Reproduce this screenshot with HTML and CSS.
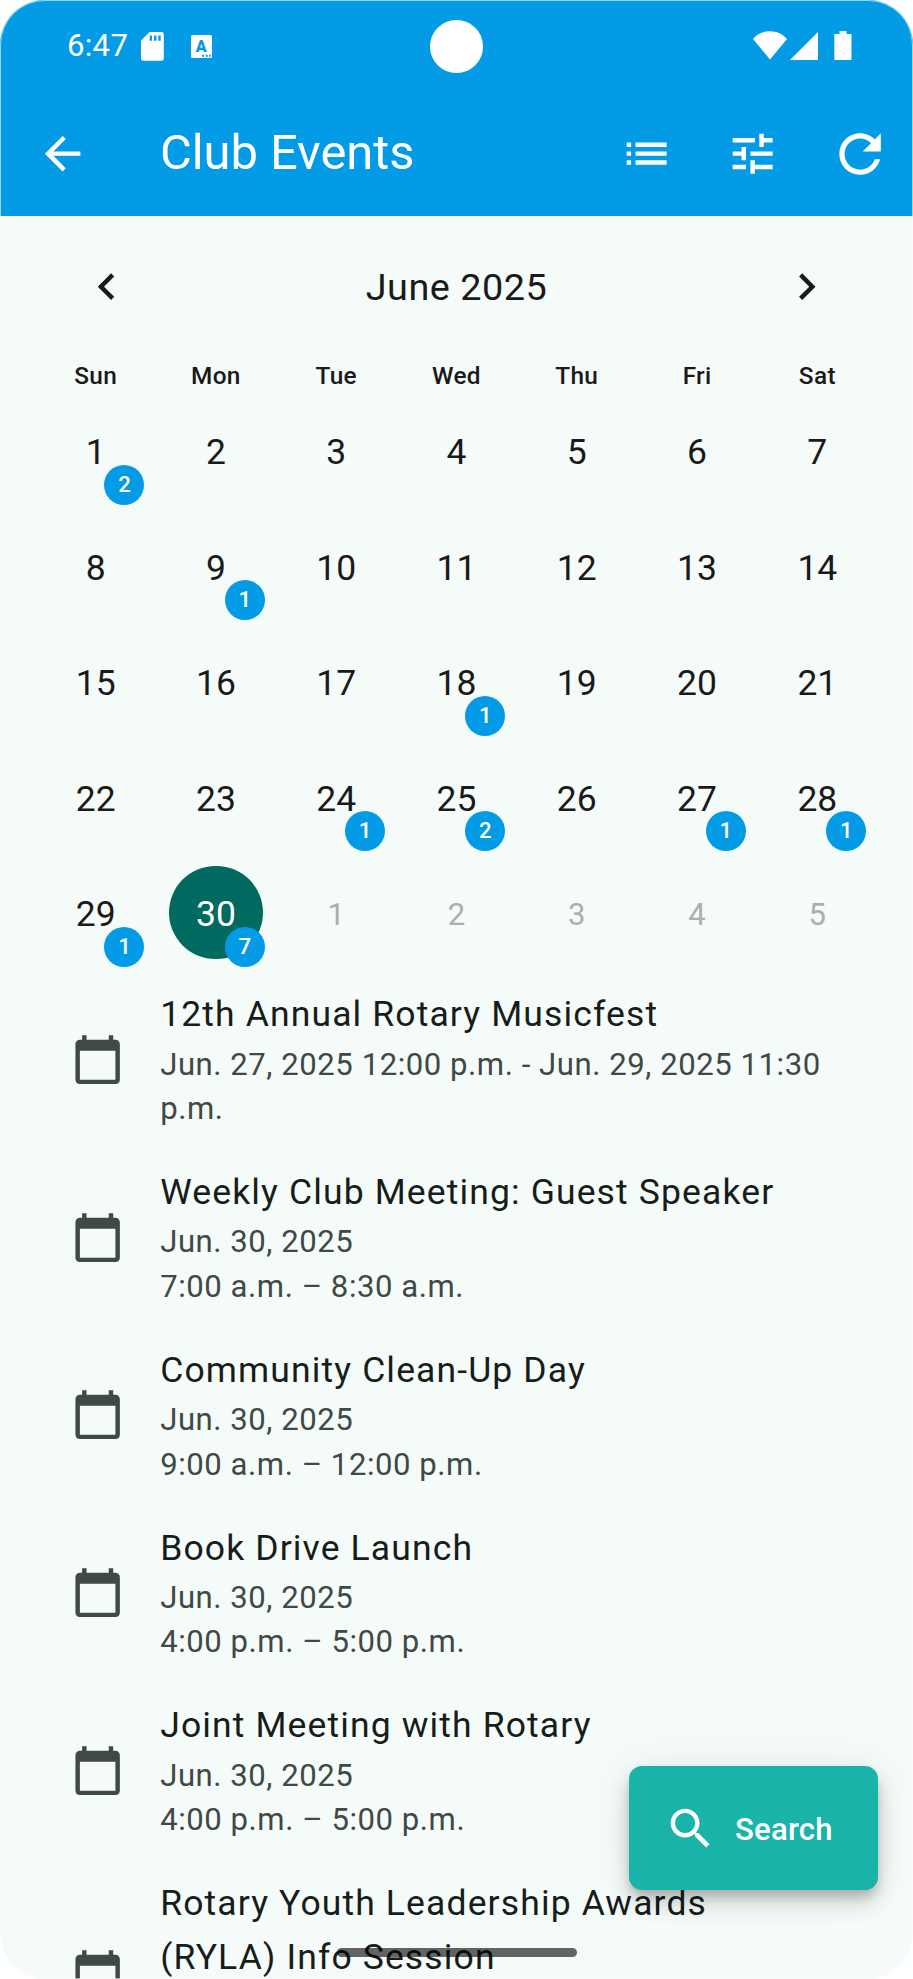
FILE: index.html
```html
<!DOCTYPE html>
<html lang="en">
<head>
    <meta charset="UTF-8">
    <meta name="viewport" content="width=device-width, initial-scale=1.0">
    <title>Club Events</title>
    <link rel="stylesheet" href="styles.css">
</head>
<body>
    <div class="phone">
        <header class="header">
            <div class="status-bar">
                <span class="clock">6:47</span>
                <svg class="sd-icon" viewBox="0 0 23 29"><path fill-rule="evenodd" d="M8.5 0H20.5a2.3 2.3 0 0 1 2.3 2.3V26.5a2.3 2.3 0 0 1-2.3 2.3H2.3A2.3 2.3 0 0 1 0 26.500V8.500zM8.700 3.500v5.300h2.300V3.500zM13 3.500v5.300h2.400V3.500zM17.300 3.500v5.300h2.400V3.500z"/></svg>
                <svg class="lang-icon" viewBox="0 0 21 23">
                    <rect width="21" height="23" rx="1.600"/>
                    <text class="lang-letter" x="10.200" y="16.800" text-anchor="middle">A</text>
                    <path class="lang-dots" d="M11 19.700h2v2h-2zM14.700 19.700h2v2h-2zM18 19.700h1.600v2H18z"/>
                </svg>
                <svg class="wifi-icon" viewBox="0 0 34 29"><path d="M17 28.500 0 8C4.500 3 10.500.3 17 .3S29.500 3 34 8z"/></svg>
                <svg class="signal-icon" viewBox="0 0 28 28"><path d="M28 0v28H0z"/></svg>
                <svg class="battery-icon" viewBox="0 0 18 29"><path d="M5.500 0h7v3H16.500a1 1 0 0 1 1 1V28a1 1 0 0 1-1 1H1.300a1 1 0 0 1-1-1V4a1 1 0 0 1 1-1H5.500z"/></svg>
            </div>
            <div class="toolbar">
                <a class="back" href="#" aria-label="Back">
                    <svg class="icon" viewBox="0 0 24 24"><path d="M20 11H7.830l5.590-5.590L12 4l-8 8 8 8 1.410-1.410L7.830 13H20z"/></svg>
                </a>
                <h1 class="title">Club Events</h1>
                <button class="tool" aria-label="List">
                    <svg class="icon" viewBox="0 0 24 24"><path d="M3 13h2v-2H3zM3 17h2v-2H3zM3 9h2V7H3zM7 13h14v-2H7zM7 17h14v-2H7zM7 7v2h14V7z"/></svg>
                </button>
                <button class="tool" aria-label="Filters">
                    <svg class="icon" viewBox="0 0 24 24"><path d="M3 17v2h6v-2zM3 5v2h10V5zM13 21v-2h8v-2h-8v-2h-2v6zM7 9v2H3v2h4v2h2V9zM21 13v-2H11v2zM15 9h2V7h4V5h-4V3h-2z"/></svg>
                </button>
                <button class="tool" aria-label="Refresh">
                    <svg class="icon icon-large" viewBox="0 0 24 24"><path d="M17.650 6.350C16.200 4.900 14.210 4 12 4c-4.420 0-7.990 3.580-7.990 8s3.570 8 7.990 8c3.730 0 6.840-2.550 7.730-6h-2.080c-.82 2.330-3.040 4-5.650 4-3.310 0-6-2.690-6-6s2.690-6 6-6c1.660 0 3.140.69 4.220 1.780L13 11h7V4z"/></svg>
                </button>
            </div>
        </header>
        <div class="camera"></div>

        <section class="calendar">
            <div class="month">
                <svg class="icon" viewBox="0 0 24 24"><path d="M15.410 7.410 14 6l-6 6 6 6 1.410-1.410L10.830 12z"/></svg>
                <h2 class="month-name">June 2025</h2>
                <svg class="icon" viewBox="0 0 24 24"><path d="M8.590 16.590 13.170 12 8.590 7.410 10 6l6 6-6 6z"/></svg>
            </div>
            <div class="weekdays">
                <span>Sun</span><span>Mon</span><span>Tue</span><span>Wed</span><span>Thu</span><span>Fri</span><span>Sat</span>
            </div>
            <div class="days">
                <div class="day">1<span class="badge">2</span></div>
                <div class="day">2</div>
                <div class="day">3</div>
                <div class="day">4</div>
                <div class="day">5</div>
                <div class="day">6</div>
                <div class="day">7</div>
                <div class="day">8</div>
                <div class="day">9<span class="badge">1</span></div>
                <div class="day">10</div>
                <div class="day">11</div>
                <div class="day">12</div>
                <div class="day">13</div>
                <div class="day">14</div>
                <div class="day">15</div>
                <div class="day">16</div>
                <div class="day">17</div>
                <div class="day">18<span class="badge">1</span></div>
                <div class="day">19</div>
                <div class="day">20</div>
                <div class="day">21</div>
                <div class="day">22</div>
                <div class="day">23</div>
                <div class="day">24<span class="badge">1</span></div>
                <div class="day">25<span class="badge">2</span></div>
                <div class="day">26</div>
                <div class="day">27<span class="badge">1</span></div>
                <div class="day">28<span class="badge">1</span></div>
                <div class="day">29<span class="badge">1</span></div>
                <div class="day"><span class="selected">30</span><span class="badge">7</span></div>
                <div class="day outside">1</div>
                <div class="day outside">2</div>
                <div class="day outside">3</div>
                <div class="day outside">4</div>
                <div class="day outside">5</div>
            </div>
        </section>

        <svg width="0" height="0" class="sprite">
            <symbol id="calendar" viewBox="0 0 24 24"><path d="M20 3h-1V1h-2v2H7V1H5v2H4c-1.100 0-2 .9-2 2v16c0 1.100.9 2 2 2h16c1.100 0 2-.9 2-2V5c0-1.100-.9-2-2-2zm0 18H4V8h16z"/></symbol>
        </svg>

        <ul class="events">
            <li class="event">
                <svg class="icon"><use href="#calendar"/></svg>
                <div class="event-text">
                    <h3>12th Annual Rotary Musicfest</h3>
                    <p>Jun. 27, 2025 12:00 p.m. - Jun. 29, 2025 11:30 p.m.</p>
                </div>
            </li>
            <li class="event">
                <svg class="icon"><use href="#calendar"/></svg>
                <div class="event-text">
                    <h3>Weekly Club Meeting: Guest Speaker</h3>
                    <p>Jun. 30, 2025<br>7:00 a.m. – 8:30 a.m.</p>
                </div>
            </li>
            <li class="event">
                <svg class="icon"><use href="#calendar"/></svg>
                <div class="event-text">
                    <h3>Community Clean-Up Day</h3>
                    <p>Jun. 30, 2025<br>9:00 a.m. – 12:00 p.m.</p>
                </div>
            </li>
            <li class="event">
                <svg class="icon"><use href="#calendar"/></svg>
                <div class="event-text">
                    <h3>Book Drive Launch</h3>
                    <p>Jun. 30, 2025<br>4:00 p.m. – 5:00 p.m.</p>
                </div>
            </li>
            <li class="event">
                <svg class="icon"><use href="#calendar"/></svg>
                <div class="event-text">
                    <h3>Joint Meeting with Rotary</h3>
                    <p>Jun. 30, 2025<br>4:00 p.m. – 5:00 p.m.</p>
                </div>
            </li>
            <li class="event event-tall">
                <svg class="icon"><use href="#calendar"/></svg>
                <div class="event-text">
                    <h3>Rotary Youth Leadership Awards (RYLA) Info Session</h3>
                </div>
            </li>
        </ul>

        <button class="search">
            <svg class="icon" viewBox="0 0 24 24"><path d="M15.500 14h-.79l-.28-.27C15.410 12.590 16 11.110 16 9.500 16 5.910 13.090 3 9.500 3S3 5.910 3 9.500 5.910 16 9.500 16c1.610 0 3.090-.59 4.230-1.570l.27.28v.79l5 4.990L20.490 19l-4.990-5zm-6 0C7.010 14 5 11.990 5 9.500S7.010 5 9.500 5 14 7.010 14 9.500 11.990 14 9.500 14z"/></svg>
            <span class="search-label">Search</span>
        </button>
        <div class="home-bar"></div>
    </div>
</body>
</html>
```
FILE: styles.css
```css
* {
    box-sizing: border-box;
}
body {
    margin: 0;
    background: #fff;
    font-family: Roboto, "Liberation Sans", sans-serif;
}
h1, h2, h3, p, ul {
    margin: 0;
    padding: 0;
    font-weight: 400;
}
button {
    border: none;
    padding: 0;
    background: none;
    color: inherit;
    font-family: inherit;
}
.phone {
    position: relative;
    width: 913px;
    height: 1979px;
    overflow: hidden;
    border-radius: 45px;
    background: #f5fbf9;
}
.phone::after {
    content: '';
    position: absolute;
    inset: 0;
    border: 1px solid rgba(255, 255, 255, 0.6);
    border-radius: 45px;
    pointer-events: none;
}
.icon {
    display: block;
    flex: none;
    width: 53.3px;
    height: 53.3px;
    fill: currentColor;
}
.icon-large {
    width: 62.2px;
    height: 62.2px;
}

/* header */
.header {
    height: 215.9px;
    background: #039be6;
    color: #fff;
}
.status-bar {
    display: flex;
    align-items: center;
    height: 91.5px;
    padding: 0 61.5px 0 67px;
    fill: #fff;
}
.clock {
    width: 74.3px;
    font-size: 31.1px;
    line-height: 36px;
    letter-spacing: 0.3px;
}
.sd-icon {
    width: 23px;
    height: 29px;
    margin-top: 1.5px;
}
.lang-icon {
    width: 21px;
    height: 23px;
    margin: 2px auto 0 26.7px;
}
.lang-letter {
    fill: #039be6;
    font-size: 16px;
    font-weight: 900;
}
.lang-dots {
    fill: #039be6;
}
.wifi-icon {
    width: 34px;
    height: 29px;
    margin-right: 3px;
}
.signal-icon {
    width: 28px;
    height: 28px;
    margin: 1px 15.5px 0 0;
}
.battery-icon {
    width: 18px;
    height: 29px;
}
.camera {
    position: absolute;
    top: 20px;
    left: 430.3px;
    width: 52.5px;
    height: 52.5px;
    border-radius: 50%;
    background: #fff;
}
.toolbar {
    display: flex;
    align-items: center;
    height: 124.4px;
}
.back {
    width: 160px;
    padding-left: 36px;
    color: #fff;
}
.title {
    flex: 1;
    padding-bottom: 2px;
    font-size: 48.9px;
    line-height: 62px;
    letter-spacing: -0.05px;
}
.tool {
    display: flex;
    justify-content: center;
    width: 106.6px;
}

/* calendar */
.calendar {
    padding: 0 35.5px;
    color: #1a1a1a;
}
.month {
    display: flex;
    align-items: center;
    justify-content: space-between;
    height: 141.6px;
    padding: 0 44.6px;
}
.month-name {
    font-size: 37.8px;
    letter-spacing: 0.5px;
}
.weekdays {
    display: grid;
    grid-template-columns: repeat(7, 1fr);
    height: 35.5px;
    font-size: 24.4px;
    font-weight: 500;
    line-height: 37.5px;
    letter-spacing: 0.3px;
    text-align: center;
}
.days {
    display: grid;
    grid-template-columns: repeat(7, 1fr);
    grid-auto-rows: 115.5px;
    font-size: 35.5px;
}
.day {
    position: relative;
    display: flex;
    justify-content: center;
    align-items: center;
    padding-top: 3px;
}
.outside {
    font-size: 31.1px;
    color: #aeaeae;
}
.selected {
    display: flex;
    justify-content: center;
    align-items: center;
    width: 93.3px;
    height: 93.3px;
    margin-top: -3px;
    padding-top: 2px;
    border-radius: 50%;
    background: #006a60;
    color: #fff;
}
.badge {
    position: absolute;
    right: 11.3px;
    bottom: 3.9px;
    width: 40px;
    height: 40px;
    border-radius: 50%;
    background: #039be6;
    color: #fff;
    font-size: 22.2px;
    font-weight: 500;
    line-height: 39px;
    text-align: center;
}

/* events */
.sprite {
    position: absolute;
}
.events {
    list-style: none;
}
.event {
    display: flex;
    align-items: center;
    min-height: 177.8px;
    padding: 17.8px 88.8px 17.8px 71.3px;
    color: #3f4946;
}
.event-tall {
    height: 231.1px;
}
.event-text {
    align-self: flex-start;
    margin-left: 35.6px;
}
.event h3 {
    font-size: 35.5px;
    line-height: 53.3px;
    letter-spacing: 1.13px;
    color: #161d1b;
}
.event p {
    padding-top: 1px;
    margin-bottom: -1px;
    font-size: 31.1px;
    line-height: 44.4px;
    letter-spacing: 0.55px;
}

/* floating button */
.search {
    position: absolute;
    right: 35.5px;
    top: 1766px;
    display: flex;
    align-items: center;
    gap: 17.8px;
    width: 249px;
    height: 124.4px;
    padding-left: 35.5px;
    border-radius: 13px;
    background: #1ab3aa;
    color: #fff;
    font-size: 31.1px;
    font-weight: 500;
    letter-spacing: 0.2px;
    box-shadow: 0 7px 11px -2px rgba(0, 0, 0, 0.2), 0 13px 22px rgba(0, 0, 0, 0.14), 0 2px 40px rgba(0, 0, 0, 0.08);
}
.search-label {
    padding-top: 2px;
}
.home-bar {
    position: absolute;
    left: 336.5px;
    top: 1948px;
    width: 240px;
    height: 9px;
    border-radius: 5px;
    background: rgba(0, 0, 0, 0.6);
}
```
